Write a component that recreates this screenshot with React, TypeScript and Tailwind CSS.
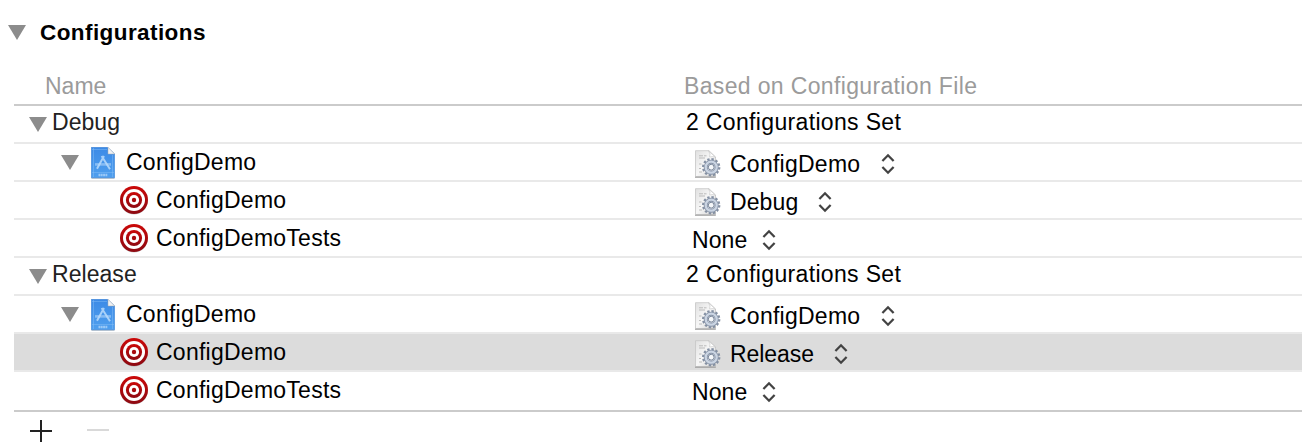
import type { ReactNode } from 'react';

function Disclosure({ className = '' }: { className?: string }) {
  return (
    <svg className={`shrink-0 ${className}`} width="18" height="15" viewBox="0 0 18 15">
      <path d="M0 0H18L9 15Z" fill="#8c8c8c" />
    </svg>
  );
}

function ProjectIcon({ className = '' }: { className?: string }) {
  return (
    <svg className={`shrink-0 ${className}`} width="24" height="32" viewBox="0 0 24 32">
      <defs>
        <linearGradient id="project" x1="0" y1="0" x2="0" y2="1">
          <stop offset="0" stopColor="#3c8ae6" />
          <stop offset="1" stopColor="#4f9fee" />
        </linearGradient>
      </defs>
      <path d="M0.5 31.2H23.5" stroke="#a9b4c0" strokeWidth="1" />
      <path d="M0.3 0.3H16.5L23.6 7V30.7H0.3Z" fill="url(#project)" stroke="#3a82d2" strokeWidth="0.6" />
      <path d="M2.5 1V30M21.5 8V30M1 25.5H23M1 2.5H16" stroke="#8fc2f7" strokeOpacity="0.7" strokeWidth="0.6" fill="none" />
      <path d="M17 0.3L23.7 7H17Z" fill="#f1f2f3" stroke="#a5a9ad" strokeWidth="0.5" />
      <g fill="none" stroke="#b9dafb">
        <path d="M13 9L6 21.8M10.6 9L19 22.2" strokeWidth="2" strokeOpacity="0.85" />
        <path d="M4 17.4H20" strokeWidth="2.6" strokeOpacity="0.55" />
      </g>
      <path d="M7.5 28H16.5" stroke="#b9dafb" strokeWidth="2.6" strokeDasharray="1.9 0.4" strokeOpacity="0.7" />
    </svg>
  );
}

function TargetIcon({ className = '' }: { className?: string }) {
  return (
    <svg className={`shrink-0 overflow-visible ${className}`} width="28" height="28" viewBox="0 0 28 28">
      <defs>
        <linearGradient id="ring" x1="0" y1="0" x2="0" y2="1">
          <stop offset="0" stopColor="#cb0808" />
          <stop offset="1" stopColor="#8d0a12" />
        </linearGradient>
      </defs>
      <circle cx="14" cy="14.7" r="13.8" fill="#000" fillOpacity="0.2" />
      <circle cx="14" cy="14" r="14" fill="url(#ring)" />
      <circle cx="14" cy="14" r="11" fill="#fff" />
      <circle cx="14" cy="14" r="8.1" fill="url(#ring)" />
      <circle cx="14" cy="14" r="5.1" fill="#fff" />
      <circle cx="14" cy="14" r="2.2" fill="#a90a0e" />
    </svg>
  );
}

function ConfigFileIcon() {
  return (
    <svg className="mt-1 shrink-0" width="26" height="28" viewBox="0 0 26 28">
      <defs>
        <linearGradient id="paper" x1="0" y1="0" x2="1" y2="1">
          <stop offset="0" stopColor="#e0e0e0" />
          <stop offset="0.5" stopColor="#f7f7f7" />
          <stop offset="1" stopColor="#d0d0d0" />
        </linearGradient>
      </defs>
      <path d="M0.5 0.7H14L20.5 7V26.5H0.5Z" fill="url(#paper)" stroke="#c5c5c5" strokeWidth="0.8" />
      <path d="M0 27.2H20.8" stroke="#9b9b9b" strokeWidth="1.1" />
      <path d="M13.5 0.8Q16 4 14.6 7Q18 6 20.5 7.2Z" fill="#fff" stroke="#c2c2c2" strokeWidth="0.6" />
      <path d="M4 5.8H8M9 5.8H11.5M4 8H10M4 14H6.5M4 18.5H6M4 22H7" stroke="#b6b6b6" strokeWidth="0.9" />
      <circle cx="16.2" cy="17.2" r="8.1" fill="none" stroke="#8490a3" strokeWidth="2.2" strokeDasharray="2.35 1.892" />
      <circle cx="16.2" cy="17.2" r="5.5" fill="#e9edf3" stroke="#8591a5" strokeWidth="4" />
      <circle cx="16.2" cy="17.2" r="5.5" fill="none" stroke="#cbd5e3" strokeWidth="2.3" />
      <circle cx="16.2" cy="17.2" r="2.9" fill="#f5f7f9" stroke="#7a879b" strokeWidth="1" />
    </svg>
  );
}

function Stepper({ className }: { className: string }) {
  return (
    <svg className={`mt-1 shrink-0 ${className}`} width="14" height="22" viewBox="0 0 14 22">
      <path d="M1.4 8L7 2.3L12.6 8M1.4 14L7 19.7L12.6 14" fill="none" stroke="#434343" strokeWidth="2.3" />
    </svg>
  );
}

function Row({ left, right, selected = false, last = false }: { left: ReactNode; right: ReactNode; selected?: boolean; last?: boolean }) {
  return (
    <div
      className={`grid grid-cols-[669px_1fr] border-b-2 ${last ? 'h-10 border-[#cbcbcb]' : 'h-[38px] border-[#e9e9e9]'} ${selected ? 'bg-[#dcdcdc] bg-clip-padding' : ''}`}
    >
      <div className="flex h-9 items-center">{left}</div>
      <div className="flex h-9 items-center">{right}</div>
    </div>
  );
}

function GroupRow({ name }: { name: string }) {
  return (
    <Row
      left={
        <>
          <Disclosure className="mt-px ml-[15px]" />
          <span className="-mt-1 ml-[5px] tracking-[0.05px] text-[#222]">{name}</span>
        </>
      }
      right={<span className="-mt-1 ml-[3px] tracking-[0.34px]">2 Configurations Set</span>}
    />
  );
}

function FileSelect({ name, textClass = '', stepper }: { name: string; textClass?: string; stepper: string }) {
  return (
    <div className="flex items-center pl-3">
      <ConfigFileIcon />
      <span className={`mt-1 ml-[9px] ${textClass}`}>{name}</span>
      <Stepper className={stepper} />
    </div>
  );
}

function NoneSelect() {
  return (
    <div className="flex items-center pl-[9px]">
      <span className="mt-1 w-[56px] tracking-[0.1px]">None</span>
      <Stepper className="ml-[14px]" />
    </div>
  );
}

function ProjectRow() {
  return (
    <Row
      left={
        <>
          <Disclosure className="mt-px ml-[47px]" />
          <ProjectIcon className="mt-0.5 ml-3" />
          <span className="ml-[11px]">ConfigDemo</span>
        </>
      }
      right={<FileSelect name="ConfigDemo" stepper="ml-[21px]" />}
    />
  );
}

function TargetRow({ name, right, selected, last }: { name: string; right: ReactNode; selected?: boolean; last?: boolean }) {
  return (
    <Row
      selected={selected}
      last={last}
      left={
        <>
          <TargetIcon className="ml-[106px]" />
          <span className="ml-2">{name}</span>
        </>
      }
      right={right}
    />
  );
}

export default function App() {
  return (
    <main className="h-[442px] w-[1302px] overflow-hidden bg-white font-['Liberation_Sans',Arial,sans-serif] text-[23px] leading-9 tracking-[0.25px] whitespace-nowrap text-black">
      <header className="flex h-16 items-center pl-2">
        <Disclosure />
        <h1 className="mt-0.5 ml-3.5 text-[22.5px] font-bold tracking-[0.42px]">Configurations</h1>
      </header>
      <section className="ml-3.5">
        <div className="grid h-[42px] grid-cols-[669px_1fr] border-b-2 border-[#cbcbcb] pt-1 text-[#9b9b9b]">
          <span className="pl-[31px] tracking-[0px]">Name</span>
          <span className="pl-px tracking-[0.35px]">Based on Configuration File</span>
        </div>
        <GroupRow name="Debug" />
        <ProjectRow />
        <TargetRow name="ConfigDemo" right={<FileSelect name="Debug" textClass="tracking-[0.1px]" stepper="ml-5" />} />
        <TargetRow name="ConfigDemoTests" right={<NoneSelect />} />
        <GroupRow name="Release" />
        <ProjectRow />
        <TargetRow name="ConfigDemo" selected right={<FileSelect name="Release" textClass="tracking-[-0.05px]" stepper="ml-5" />} />
        <TargetRow name="ConfigDemoTests" last right={<NoneSelect />} />
      </section>
      <footer className="flex pt-2 pl-[30px]">
        <svg width="22" height="22" viewBox="0 0 22 22">
          <path d="M0 11H22M11 0V22" stroke="#222" strokeWidth="2" />
        </svg>
        <svg className="ml-[35px]" width="22" height="22" viewBox="0 0 22 22">
          <path d="M0 10H22" stroke="#d9d9d9" strokeWidth="2" />
        </svg>
      </footer>
    </main>
  );
}
